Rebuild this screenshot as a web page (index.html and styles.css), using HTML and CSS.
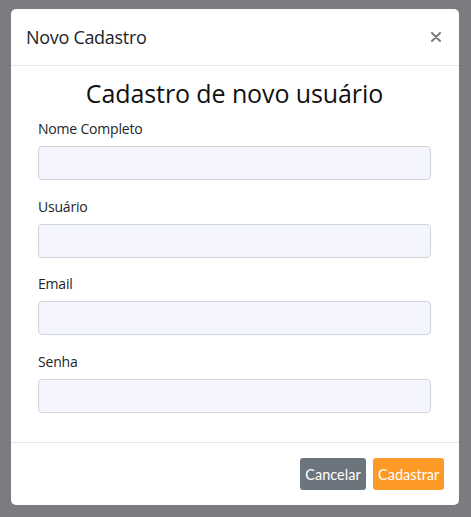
FILE: index.html
```
<!DOCTYPE html>
<html lang="pt-BR">
<head>
<meta charset="utf-8">
<title>Novo Cadastro</title>
<link rel="stylesheet" href="styles.css">
</head>
<body>
<div class="modal">
  <div class="modal-header">
    <span class="modal-title">Novo Cadastro</span>
    <button class="close" aria-label="Fechar">
      <svg width="10" height="10" viewBox="0 0 10 10"><path d="M1 1L9 9M9 1L1 9" stroke="#7d7d7d" stroke-width="2" stroke-linecap="round"/></svg>
    </button>
  </div>
  <div class="modal-body">
    <h2 class="form-title">Cadastro de novo usuário</h2>
    <div class="group"><label>Nome Completo</label><input class="field" type="text"></div>
    <div class="group"><label>Usuário</label><input class="field" type="text"></div>
    <div class="group"><label>Email</label><input class="field" type="email"></div>
    <div class="group"><label>Senha</label><input class="field" type="password"></div>
  </div>
  <div class="modal-footer">
    <button class="btn btn-gray">Cancelar</button>
    <button class="btn btn-orange">Cadastrar</button>
  </div>
</div>
</body>
</html>
```
FILE: styles.css
```
html, body { margin: 0; padding: 0; }
body {
  background: #7c7b80;
  font-family: "Open Sans", "Noto Sans", sans-serif;
  color: #212529;
  height: 517px;
  overflow: hidden;
}
.modal {
  margin: 9px 12px 0 11px;
  width: 448px;
  height: 496px;
  background: #fff;
  border-radius: 5px;
  display: flex;
  flex-direction: column;
  box-sizing: border-box;
}
.modal-header {
  display: flex;
  align-items: center;
  justify-content: space-between;
  padding: 14px 18px 14px 15px;
  border-bottom: 1px solid #e6e6e6;
  height: 57px;
  box-sizing: border-box;
}
.modal-title {
  font-size: 18px;
  line-height: 27px;
  letter-spacing: -0.3px;
  color: #212529;
}
.close {
  background: none;
  border: 0;
  padding: 0;
  width: 10px;
  height: 10px;
  display: flex;
}
.modal-body {
  padding: 11px 28px 29px 27px;
  display: flex;
  flex-direction: column;
  gap: 15.6px;
  flex: 1;
}
.form-title {
  margin: 0 0 -6.4px;
  text-align: center;
  font-weight: 400;
  font-size: 25px;
  line-height: 32px;
  letter-spacing: -0.1px;
  color: #111;
}
.group { display: flex; flex-direction: column; }
.group label {
  font-size: 14px;
  line-height: 21px;
  letter-spacing: -0.2px;
  margin-bottom: 7px;
}
.field {
  height: 34px;
  box-sizing: border-box;
  border: 1px solid #ced4da;
  border-radius: 4px;
  background: #f5f6fd;
  margin: 0;
}
.modal-footer {
  border-top: 1px solid #e6e6e6;
  padding: 15px;
  display: flex;
  justify-content: flex-end;
  gap: 7px;
}
.btn {
  height: 32px;
  border: 0;
  border-radius: 3px;
  color: #fff;
  font-family: Lato, "Open Sans", sans-serif;
  font-size: 14.5px;
  padding: 0 5px;
}
.btn-gray { background: #6c757d; width: 66px; }
.btn-orange { background: #fd9a27; width: 71px; }
```
